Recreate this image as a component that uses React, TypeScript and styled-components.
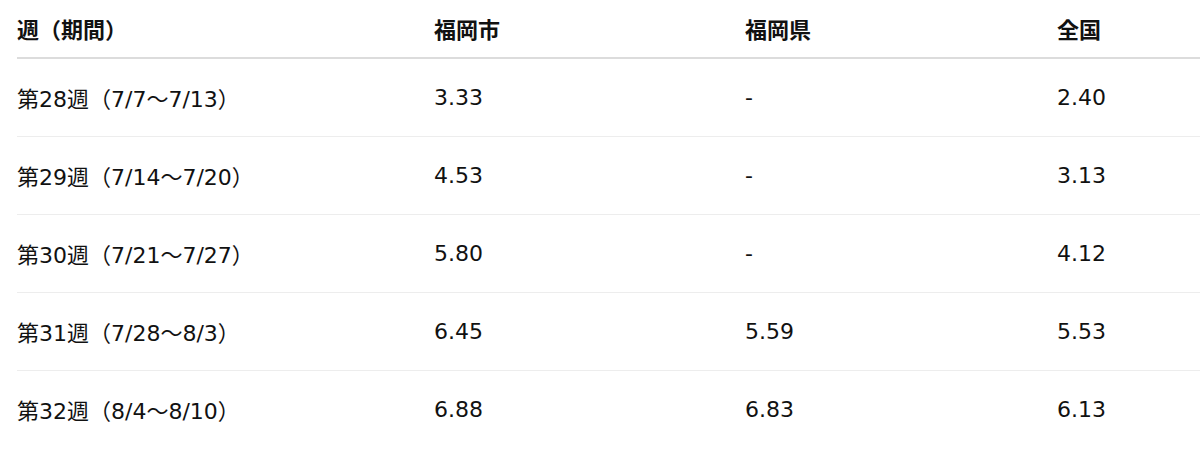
import React from 'react';
import styled, { createGlobalStyle } from 'styled-components';

const GlobalStyle = createGlobalStyle`
  html, body {
    margin: 0;
    padding: 0;
    background: #ffffff;
    overflow: hidden;
  }
  body {
    font-family: "DejaVu Sans", "Noto Sans CJK JP", sans-serif;
    color: #111111;
  }
`;

const Wrapper = styled.div`
  padding-left: 17px;
  width: 1183px;
`;

const Table = styled.table`
  width: 100%;
  border-collapse: collapse;
  table-layout: fixed;
`;

const HeadCell = styled.th<{ $w?: number }>`
  width: ${(p) => (p.$w ? `${p.$w}px` : 'auto')};
  height: 58px;
  padding: 0 0 2px;
  text-align: left;
  font-size: 22px;
  font-weight: 700;
  border-bottom: 2px solid #dcdcdc;
  vertical-align: middle;
  box-sizing: border-box;
`;

const Row = styled.tr`
  border-bottom: 1px solid #ededed;

  &:last-child {
    border-bottom: none;
  }
`;

const Cell = styled.td`
  height: 78px;
  padding: 0;
  font-size: 22px;
  font-weight: 400;
  vertical-align: middle;
  box-sizing: border-box;
`;

const weeks = [
  { week: '第28週（7/7〜7/13）', city: '3.33', pref: '-', nation: '2.40' },
  { week: '第29週（7/14〜7/20）', city: '4.53', pref: '-', nation: '3.13' },
  { week: '第30週（7/21〜7/27）', city: '5.80', pref: '-', nation: '4.12' },
  { week: '第31週（7/28〜8/3）', city: '6.45', pref: '5.59', nation: '5.53' },
  { week: '第32週（8/4〜8/10）', city: '6.88', pref: '6.83', nation: '6.13' },
];

const App = () => {
  return (
    <>
      <GlobalStyle />
      <Wrapper>
        <Table>
          <thead>
            <tr>
              <HeadCell $w={417}>週（期間）</HeadCell>
              <HeadCell $w={311}>福岡市</HeadCell>
              <HeadCell $w={312}>福岡県</HeadCell>
              <HeadCell>全国</HeadCell>
            </tr>
          </thead>
          <tbody>
            {weeks.map((row) => (
              <Row key={row.week}>
                <Cell>{row.week}</Cell>
                <Cell>{row.city}</Cell>
                <Cell>{row.pref}</Cell>
                <Cell>{row.nation}</Cell>
              </Row>
            ))}
          </tbody>
        </Table>
      </Wrapper>
    </>
  );
};

export default App;
